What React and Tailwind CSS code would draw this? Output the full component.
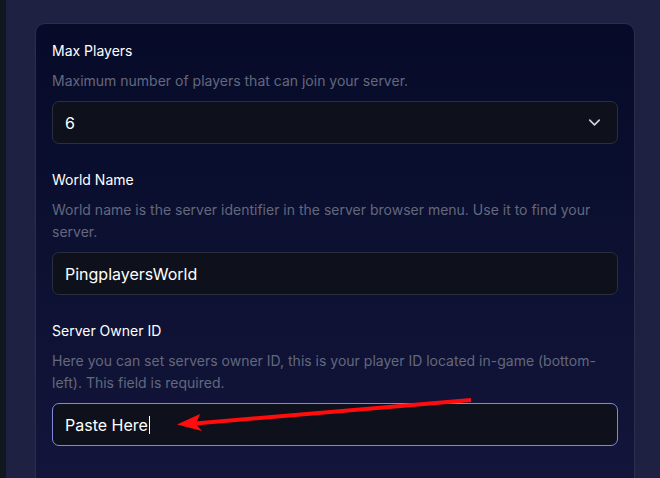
import React from "react";

function Chevron() {
  return (
    <svg width="19" height="19" viewBox="0 0 24 24" fill="none" stroke="#d1d5db" strokeWidth="2" strokeLinecap="round" strokeLinejoin="round">
      <path d="M6 9l6 6 6-6" />
    </svg>
  );
}

function Field({ label, desc, children }) {
  return (
    <div className="flex flex-col">
      <div className="text-[14px] leading-[20px] font-normal text-white">{label}</div>
      <div className="mt-[9px] text-[14px] leading-[22px] text-[#63687d]">{desc}</div>
      <div className="mt-[9px]">{children}</div>
    </div>
  );
}

export default function App() {
  return (
    <div className="relative w-[660px] h-[478px] overflow-hidden flex bg-[#1f2142] font-['Inter',sans-serif]">
      <div className="w-[6px] shrink-0 bg-[#12161f]" />
      <div className="flex-1 pl-[29px] pr-[25px] pt-[23px]">
        <div className="h-[480px] rounded-[10px] border border-[#2b2f47] bg-gradient-to-b from-[#070b29] to-[#13163b] px-4 pt-[17px] flex flex-col gap-[26px]">
          <Field label="Max Players" desc="Maximum number of players that can join your server.">
            <div className="h-[43px] rounded-[7px] border border-[#2a2e3d] bg-[#0e111c] flex items-center justify-between pl-3 pr-[13px]">
              <span className="text-[16px] text-white">6</span>
              <Chevron />
            </div>
          </Field>
          <Field
            label="World Name"
            desc="World name is the server identifier in the server browser menu. Use it to find your server."
          >
            <div className="h-[43px] rounded-[7px] border border-[#2a2e3d] bg-[#0e111c] flex items-center pl-3">
              <span className="text-[16px] text-white">PingplayersWorld</span>
            </div>
          </Field>
          <Field
            label="Server Owner ID"
            desc="Here you can set servers owner ID, this is your player ID located in-game (bottom-left). This field is required."
          >
            <div className="h-[43px] rounded-[7px] border border-[#8488dc] bg-[#0e111c] flex items-center pl-3">
              <span className="text-[16px] text-white">Paste Here</span>
              <span className="ml-px w-px h-[18px] bg-white" />
            </div>
          </Field>
        </div>
      </div>
      <svg className="absolute left-0 top-0 pointer-events-none" width="660" height="478" viewBox="0 0 660 478">
        <line x1="471" y1="400" x2="195" y2="423.5" stroke="#ff0d0d" strokeWidth="4" />
        <polygon points="177,424.5 200,414 196,424 202,431" fill="#ff0d0d" />
      </svg>
    </div>
  );
}
